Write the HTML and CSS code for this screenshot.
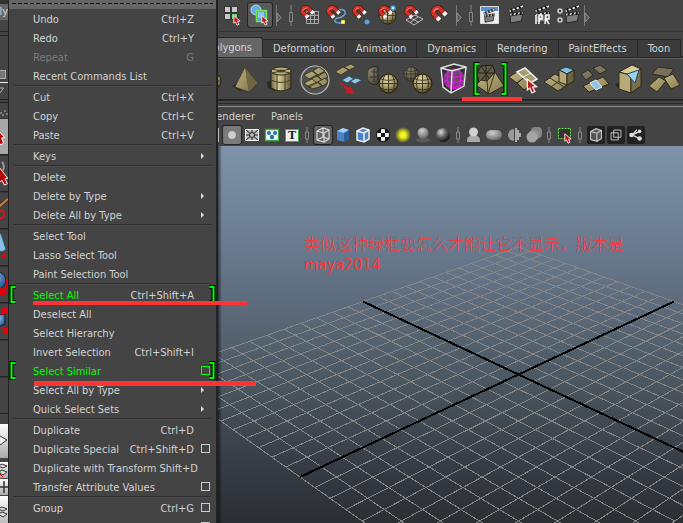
FILE: index.html
```html
<!DOCTYPE html>
<html lang="en">
<head>
<meta charset="utf-8">
<title>Maya 2014</title>
<link rel="stylesheet" href="styles.css">
</head>
<body>
<svg class="defs" width="0" height="0" aria-hidden="true">
  <defs>
    <radialGradient id="tan" cx=".4" cy=".3" r=".75"><stop offset="0" stop-color="#e8dcae"/><stop offset=".55" stop-color="#a39768"/><stop offset="1" stop-color="#4c4529"/></radialGradient>
    <radialGradient id="dimtan" cx=".4" cy=".3" r=".75"><stop offset="0" stop-color="#8b856d"/><stop offset="1" stop-color="#4a4639"/></radialGradient>
    <radialGradient id="grey" cx=".4" cy=".3" r=".7"><stop offset="0" stop-color="#d0d0d0"/><stop offset="1" stop-color="#6c6c6c"/></radialGradient>
    <radialGradient id="ball" cx=".35" cy=".3" r=".7"><stop offset="0" stop-color="#ddd"/><stop offset=".5" stop-color="#666"/><stop offset="1" stop-color="#181818"/></radialGradient>
    <radialGradient id="glow"><stop offset="0" stop-color="#ffff30"/><stop offset=".4" stop-color="#e6e61a"/><stop offset="1" stop-color="#e6e61a" stop-opacity="0"/></radialGradient>
    <radialGradient id="blue" cx=".4" cy=".3" r=".8"><stop offset="0" stop-color="#7fb4e8"/><stop offset="1" stop-color="#173f78"/></radialGradient>
    <linearGradient id="face" x2="1" y2="1"><stop offset="0" stop-color="#c4b888"/><stop offset="1" stop-color="#85794f"/></linearGradient>
    <linearGradient id="barrel"><stop offset="0" stop-color="#6f6642"/><stop offset=".4" stop-color="#d8cc9a"/><stop offset="1" stop-color="#5a5233"/></linearGradient>
  </defs>
  <symbol id="cursor" viewBox="0 0 8 11"><path d="M.8.8v7.4l1.7-1.3 1.5 3.3 2-.9-1.5-3.1 2.6-.2z" fill="#c01818" stroke="#f4e8e8" stroke-width=".9"/></symbol>
  <symbol id="magnet" viewBox="0 0 16 15"><path d="M8 11.5 4 7.500A3.500 3.500 0 0 1 9 3l4.500 4.500" fill="none" stroke="#5c0f0b" stroke-width="4.600"/><path d="M8 11.500 4 7.500A3.500 3.500 0 0 1 9 3l4.500 4.500" fill="none" stroke="#d33226" stroke-width="3.400"/><path d="M4 5.500Q5.500 2.500 8 3" fill="none" stroke="#f4897c" stroke-width="1"/><path d="M6.900 10.400 9 12.500M12.300 6.300l2.100 2.100" stroke="#fff" stroke-width="3.600"/></symbol>
  <symbol id="sphere" viewBox="0 0 20 20"><circle cx="10" cy="10" r="9" fill="url(#tan)" stroke="#26220f"/><path d="M10 1v18M1 10h18M2.500 5.500q7.500 3 15 0M2.500 14.500q7.500 3 15 0M6.500 2q-4.500 8 0 16M13.500 2q4.500 8 0 16" fill="none" stroke="#3c3620" stroke-width=".9"/></symbol>
  <symbol id="dimsphere" viewBox="0 0 20 20"><circle cx="10" cy="10" r="9" fill="url(#dimtan)" stroke="#2b2820"/><path d="M10 1v18M1 10h18M2.500 5.500q7.500 3 15 0M2.500 14.500q7.500 3 15 0M6.500 2q-4.500 8 0 16M13.500 2q4.500 8 0 16" fill="none" stroke="#302c20" stroke-width=".9"/></symbol>
  <symbol id="clapper" viewBox="0 0 17 20"><path d="M2 10h12.500l-1 7L2.500 19z" fill="#7d7d7d" stroke="#262626"/><path d="M1.500 9.500 15 7.500v2.500l-13 2zM.8 6 15 .8l.8 2.500L1.500 8.500z" fill="#eee" stroke="#222" stroke-width=".8"/><path d="m3 5 1.500 2.500M7 3.500 8.500 6M11 2l1.500 2.500M4 11.500l1.500-2.500M8 11l1.500-2.500M12 10.500 13.500 8" stroke="#111" stroke-width="1.800"/></symbol>
  <symbol id="arrow" viewBox="0 0 12 26"><path d="M3.500 3v21" stroke="#777"/><path d="M4 11v9l4-4.500z" fill="#555" stroke="#999"/></symbol>
  <symbol id="handle" viewBox="0 0 11 26"><path d="M5.500 3v21" stroke="#858585"/><path d="M4 10.500h3v9H4z" fill="#444" stroke="#858585"/></symbol>
  <symbol id="grip" viewBox="0 0 11 20"><path d="M5 2v16" stroke="#888"/><path d="M3.500 7h3v7h-3z" fill="#444" stroke="#888"/></symbol>
  <symbol id="bracket" viewBox="0 0 8 19"><path d="M6.500 2h-4v15h4" fill="none" stroke="#000" stroke-width="4"/><path d="M6.500 2h-4v15h4" fill="none" stroke="#0f0" stroke-width="2"/></symbol>
  <symbol id="bracket-tall" viewBox="0 0 8 36"><path d="M6.500 3h-4v30h4" fill="none" stroke="#000" stroke-width="4"/><path d="M6.500 3h-4v30h4" fill="none" stroke="#0f0" stroke-width="2"/></symbol>
</svg>
<div class="app">
  <aside class="toolbox" aria-label="Tool box">
    <span class="strip-tab">Poly</span>
    <span class="strip-shelf"><i class="chip"></i></span>
    <svg class="strip-head" viewBox="0 0 8 36"><path d="M0 .5h8" stroke="#eee"/><path d="M-6 6h9.500L0 11" fill="none" stroke="#aaa"/><path d="M0 17.500h8M0 20.500h8" stroke="#222"/><path d="M0 31h2M4 29h2M2 33h2M6 32h2" stroke="#777" stroke-width="2"/></svg>
    <button class="tool lit" aria-label="Select"><svg viewBox="0 0 8 36"><path d="M-4 9 4.500 19l-3 .5 2 5.500-3 1.500-4-6z" fill="#b80000" stroke="#fff"/></svg></button>
    <button class="tool" aria-label="Lasso"><svg viewBox="0 0 8 36"><path d="M2 6q3 4 1 9" stroke="#999" stroke-width="2" fill="none"/><path d="M-3 9 8 23l-3 .5 2.500 5-3 1.500L2 25l-5 4z" fill="#b80000" stroke="#fff"/></svg></button>
    <button class="tool" aria-label="Paint"><svg viewBox="0 0 8 36"><path d="M8 6-2 15" stroke="#422" stroke-width="4"/><path d="M8 6-2 15" stroke="#b07c48" stroke-width="2.500"/><path d="M0 17.500c6 0 5 10-1 8" fill="none" stroke="#e01010" stroke-width="2"/></svg></button>
    <button class="tool" aria-label="Move"><svg viewBox="0 0 8 36"><path d="M-2 4h3l5 16-3 2h-6z" fill="#8ac0e4" stroke="#2b5d85"/><path d="m0 28 5-5v6z" fill="#f00000"/></svg></button>
    <button class="tool" aria-label="Rotate"><svg viewBox="0 0 8 36"><circle cx="-3" cy="14" r="9" fill="url(#blue)" stroke="#123"/><path d="M0 26q8-1 7-14" fill="none" stroke="#e00010" stroke-width="2.500"/><path d="m-1 22 5-1-1 4 5 1-4 3h-5z" fill="#e00010"/></svg></button>
    <button class="tool" aria-label="Scale"><svg viewBox="0 0 8 36"><path d="M-4 12 5 10v11l-9 3z" fill="url(#blue)" stroke="#123"/><path d="m1 5 7-2v8l-2-2-4 3zM1 23l5 2 2-3v10l-6-3 2-1z" fill="#e8000c"/></svg></button>
    <span class="tool"></span>
    <span class="tool"></span>
    <span class="strip-gap"></span>
    <button class="view tall" aria-label="Single view"><svg viewBox="0 0 8 34"><path d="m-5 17 5-5 7 4-7 5z" fill="#eee" stroke="#333"/></svg></button>
    <button class="view" aria-label="Four view"><svg viewBox="0 0 8 16"><path d="m-2 4 4-2 5 2-4 2zM-2 10l4-2 5 2-4 3z" fill="#ddd" stroke="#333"/><path d="M0 9v4" stroke="#0b0"/><path d="m0 12 3 3" stroke="#d00"/></svg></button>
    <button class="view" aria-label="Split view"><svg viewBox="0 0 8 16"><path d="M0 8h8M4 2v12" stroke="#333" stroke-width="1.500"/></svg></button>
    <button class="view tall" aria-label="Outliner view"><svg viewBox="0 0 8 34"><path d="m-2 13 4-2 5 2-4 2zM-2 18l4-2 5 2-4 3z" fill="#ddd" stroke="#333"/></svg></button>
  </aside>

  <nav class="menu" aria-label="Edit menu">
    <div class="tearoff"></div>
    <ul>
      <li><button class="item">Undo<kbd>Ctrl+Z</kbd></button></li>
      <li><button class="item">Redo<kbd>Ctrl+Y</kbd></button></li>
      <li><button class="item" disabled>Repeat<kbd>G</kbd></button></li>
      <li><button class="item">Recent Commands List</button></li>
    </ul>
    <ul>
      <li><button class="item">Cut<kbd>Ctrl+X</kbd></button></li>
      <li><button class="item">Copy<kbd>Ctrl+C</kbd></button></li>
      <li><button class="item">Paste<kbd>Ctrl+V</kbd></button></li>
    </ul>
    <ul>
      <li class="sub"><button class="item">Keys</button></li>
    </ul>
    <ul>
      <li><button class="item">Delete</button></li>
      <li class="sub"><button class="item">Delete by Type</button></li>
      <li class="sub"><button class="item">Delete All by Type</button></li>
    </ul>
    <ul>
      <li><button class="item">Select Tool</button></li>
      <li><button class="item">Lasso Select Tool</button></li>
      <li><button class="item">Paint Selection Tool</button></li>
    </ul>
    <ul>
      <li class="new"><svg class="bracket"><use href="#bracket"/></svg><button class="item">Select All<kbd>Ctrl+Shift+A</kbd></button><svg class="bracket end"><use href="#bracket"/></svg><i class="mark mark-all"></i></li>
      <li><button class="item">Deselect All</button></li>
      <li><button class="item">Select Hierarchy</button></li>
      <li><button class="item">Invert Selection<kbd>Ctrl+Shift+I</kbd></button></li>
      <li class="new"><svg class="bracket"><use href="#bracket"/></svg><button class="item">Select Similar</button><button class="option" aria-label="Select Similar options"></button><svg class="bracket end"><use href="#bracket"/></svg><i class="mark mark-similar"></i></li>
      <li class="sub"><button class="item">Select All by Type</button></li>
      <li class="sub"><button class="item">Quick Select Sets</button></li>
    </ul>
    <ul>
      <li><button class="item">Duplicate<kbd>Ctrl+D</kbd></button></li>
      <li><button class="item">Duplicate Special<kbd>Ctrl+Shift+D</kbd></button><button class="option" aria-label="Duplicate Special options"></button></li>
      <li><button class="item">Duplicate with Transform<kbd>Shift+D</kbd></button></li>
      <li><button class="item">Transfer Attribute Values</button><button class="option" aria-label="Transfer Attribute Values options"></button></li>
    </ul>
    <ul>
      <li><button class="item">Group<kbd>Ctrl+G</kbd></button><button class="option" aria-label="Group options"></button></li>
      <li><button class="item" aria-label="More"></button><button class="option" aria-label="More options"></button></li>
    </ul>
  </nav>

  <main>
    <div class="status">
      <button aria-label="Select by hierarchy"><svg viewBox="0 0 26 26"><g fill="#c8c8c8" stroke="#222" stroke-width=".8"><path d="M3.500 4.500h6v6h-6zM10.500 4.500h6v6h-6zM3.500 11.500h6v6h-6z"/><path d="M10.500 11.500h6v6h-6z" fill="#7ed67e"/></g><use href="#cursor" x="12" y="13" width="8" height="11"/></svg></button>
      <button class="on" aria-label="Select by object"><svg viewBox="0 0 26 26"><circle cx="9" cy="8" r="5" fill="#6cabe0" stroke="#b4daf7"/><path d="M9.500 8.500h10v11h-10z" fill="#5d9fd8" stroke="#6de34f" stroke-width="1.500"/><path d="M11 10h6v6h-6z" fill="#8cc4ef"/><use href="#cursor" x="14" y="13" width="8" height="11"/></svg></button>
      <svg class="sep"><use href="#arrow"/></svg><svg class="sep"><use href="#handle"/></svg>
      <button aria-label="Snap to grids"><svg viewBox="0 0 26 26"><path d="M9.500 9.500h12v12h-12zM13.500 9v12M17.500 9v12M9 13.500h13M9 17.500h13" fill="none" stroke="#aaa"/><use href="#magnet" x="2" y="3" width="16" height="15"/></svg></button>
      <button aria-label="Snap to curves"><svg viewBox="0 0 26 26"><path d="M14 8q9-2 8 4-3 4-8 4-6 5 5 5" fill="none" stroke="#6b9fd0" stroke-width="1.500"/><path d="M18.500 18.500h3v3h-3z" fill="#ffc" stroke="#e8e020"/><use href="#magnet" x="2" y="3" width="16" height="15"/></svg></button>
      <button aria-label="Snap to points"><svg viewBox="0 0 26 26"><circle cx="18" cy="20" r="2.500" fill="#5f9fe0"/><use href="#magnet" x="2" y="3" width="16" height="15"/></svg></button>
      <button aria-label="Snap to projected center"><svg viewBox="0 0 26 26"><use href="#sphere" x="3" y="4" width="19" height="19"/><use href="#magnet" x="2" y="3" width="16" height="15"/><circle cx="18" cy="6" r="2" fill="#eee" stroke="#4a9ae0" stroke-width="1.500"/></svg></button>
      <button aria-label="Snap to view planes"><svg viewBox="0 0 26 26"><path d="m5 18 9-5 8 4-9 6zM9 15.500l9 5M17 15l-8 5.500" fill="none" stroke="#bbb"/><use href="#magnet" x="2" y="3" width="16" height="15"/></svg></button>
      <button aria-label="Make live"><svg viewBox="0 0 26 26"><use href="#magnet" x="2" y="3" width="19" height="18"/></svg></button>
      <svg class="sep"><use href="#arrow"/></svg><svg class="sep"><use href="#handle"/></svg>
      <button aria-label="Render view"><svg viewBox="0 0 26 26"><path d="M3.500 4.500h18v17h-18z" fill="#eee" stroke="#ddd"/><path d="M4 5h17v4H4z" fill="#4f93d5"/><use href="#clapper" x="6" y="6" width="13" height="15"/></svg></button>
      <button aria-label="Render frame"><svg viewBox="0 0 26 26"><use href="#clapper" x="5" y="2" width="17" height="20"/></svg></button>
      <button aria-label="IPR render"><svg viewBox="0 0 26 26"><use href="#clapper" x="5" y="2" width="17" height="20"/><path d="M7 13v9M10 22v-9h3v4h-3m6 5 1-9h3v4h-3l3 5" fill="none" stroke="#fff" stroke-width="1.500"/></svg></button>
      <button aria-label="Render settings"><svg viewBox="0 0 26 26"><use href="#clapper" x="9" y="2" width="17" height="20"/><g fill="#444" stroke="#ccc" stroke-width="1.500"><circle cx="5" cy="9" r="2"/><circle cx="5" cy="18" r="2"/></g></svg></button>
      <svg class="sep"><use href="#arrow"/></svg>
    </div>

    <div class="tabs" role="tablist">
      <button class="tab current" role="tab">Polygons</button><button class="tab" role="tab">Deformation</button><button class="tab" role="tab">Animation</button><button class="tab" role="tab">Dynamics</button><button class="tab" role="tab">Rendering</button><button class="tab" role="tab">PaintEffects</button><button class="tab" role="tab">Toon</button>
    </div>

    <div class="shelf">
      <button class="cut" aria-label="Sphere"><svg viewBox="0 0 35 35"><use href="#sphere" x="9" y="10" width="20" height="20"/></svg></button>
      <button aria-label="Pyramid"><svg viewBox="0 0 35 35"><path d="m4 24 12-7 2 10-6 2z" fill="#292929"/><path d="M17 5 7 25l14 5z" fill="url(#face)"/><path d="m17 5 4 25 9-9z" fill="#6f6642"/><path d="M17 5 7 25l14 5 9-9z" fill="none" stroke="#39341f" stroke-width=".7"/></svg></button>
      <button aria-label="Cylinder"><svg viewBox="0 0 35 35"><path d="m4 20 8-4v13l-7-3z" fill="#292929"/><path d="M8 9v17q10 6 20 0V9z" fill="url(#barrel)" stroke="#2a2614"/><ellipse cx="18" cy="9" rx="10" ry="4" fill="#bdb182" stroke="#2a2614"/><ellipse cx="18" cy="9" rx="4" ry="1.500" fill="#4e482f"/><path d="M8 18q10 5 20 0M14 13v16M22 13v16M9 7l18 4M9 11l18-4" fill="none" stroke="#494226"/></svg></button>
      <button aria-label="Plane"><svg viewBox="0 0 35 35"><circle cx="17" cy="18" r="14" fill="#505050" stroke="#bcbcbc" stroke-width="1.200"/><g fill="url(#face)" stroke="#302b18" stroke-width=".8"><path d="m6 13 8-4 5 4-8 4zM15 9l6-4 6 4-7 4zM11 18l8-4 5 4-8 4zM20 14l7-4 3 5-6 3z"/><path d="m6 21 8-4 5 4-8 4zM15 27l-5-3 9-4 5 4zM20 20l7-4 3 4-5 4z"/></g></svg></button>
      <button aria-label="Combine"><svg viewBox="0 0 35 35"><g fill="url(#face)" stroke="#302b18" stroke-width=".8"><path d="m2 10 8-5 6 3-8 5zM11 5l7-3 5 3-7 3z"/></g><path d="m9 18 7-4 5 3-7 4zM17 19l6-3 6 2-7 4z" fill="#8fc7e3" stroke="#27465a" stroke-width=".8"/><path d="m4 18 12 8 1-2 5 8-10-1 2-2z" fill="#c81c24"/></svg></button>
      <button aria-label="Separate"><svg viewBox="0 0 35 35"><path d="M10 5a9 9 0 1 0 0 17z" fill="url(#dimtan)" stroke="#2b2820"/><path d="M3 10h7M2 15h8M6 7v13" stroke="#333"/><use href="#sphere" x="10" y="11" width="21" height="21"/></svg></button>
      <button aria-label="Extract"><svg viewBox="0 0 35 35"><use href="#dimsphere" x="0" y="4" width="16" height="16"/><use href="#sphere" x="9" y="11" width="21" height="21"/></svg></button>
      <button aria-label="Smooth"><svg viewBox="0 0 35 35"><path d="m3 6 13-4 12 3-2 19-13 8-8-7z" fill="#333"/><circle cx="16" cy="17" r="10" fill="#69466a" stroke="#d018d0"/><path d="M7 13q9 5 18 0M6 18q10 5 20 0M8 23q8 4 15 0M11 8q-4 10 1 18M16 7v20M21 8q4 10-1 17" fill="none" stroke="#d61ed6" stroke-width="1.200"/><path d="m3 6 11 3 14-4M14 9l-1 22M3 6l2 19 8 6 13-7 2-19-12-3z" fill="none" stroke="#e4e4e4" stroke-width="1.400"/></svg></button>
      <button class="new" aria-label="Reduce"><svg viewBox="0 0 35 35"><path d="m4 11 4-7 11-1 3 6-6 9-10 2z" fill="#625b48" stroke="#1f1c14"/><path d="m8 4 9 14m3-15L7 20M4 11h17M13 4v15" stroke="#25221a" fill="none"/><path d="m3 23 5-5 6 1 8-9 9 14-15 8z" fill="url(#face)" stroke="#302b18"/><path d="m22 10-7 22-1-13" fill="none" stroke="#39341f"/></svg><svg class="bracket"><use href="#bracket-tall"/></svg><svg class="bracket end"><use href="#bracket-tall"/></svg></button>
      <button aria-label="Split polygon"><svg viewBox="0 0 35 35"><g fill="url(#face)" stroke="#302b18"><path d="m1 15 8-5 8 5-8 6zM9 21l8-6 7 7-8 6z"/></g><path d="m9 10 8-4 12 11-7 4z" fill="#a59a70" stroke="#f3f3f3" stroke-width="1.500"/><path d="m15 15 8-4" stroke="#f3f3f3"/><use href="#cursor" x="18" y="16" width="12" height="16"/></svg></button>
      <button aria-label="Extrude"><svg viewBox="0 0 35 35"><path d="m1 20 11-8 15 9-12 8z" fill="url(#face)" stroke="#302b18"/><path d="m7 16 14 9M8 25l11-8" stroke="#39341f"/><path d="m16 8 7-3 8 3-7 4z" fill="#83bfe2" stroke="#27465a"/><path d="M16 8v12l8 3V12z" fill="#b5a97a" stroke="#302b18"/><path d="M31 8v11l-7 4V12z" fill="#6c6341" stroke="#302b18"/></svg></button>
      <button aria-label="Bridge"><svg viewBox="0 0 35 35"><path d="m3 12 7-4 5 5-7 5zM15 6l7-3 7 5-7 4z" fill="#7a745f" stroke="#302b18"/><path d="m5 24 20-9 6 7-20 8z" fill="url(#face)" stroke="#302b18"/><path d="m12 21 6-3 6 7-6 3z" fill="#8ec6e6" stroke="#eee"/></svg></button>
      <button aria-label="Bevel"><svg viewBox="0 0 35 35"><path d="m2 22 10-4 3 12-9-3z" fill="#292929"/><path d="M6 10v17l12 4V13z" fill="#b5a977" stroke="#302b18"/><path d="m6 10 13-7 9 4-10 6z" fill="#d8cc9a" stroke="#302b18"/><path d="M28 7v17l-10 7V13z" fill="#786f4a" stroke="#302b18"/><path d="m14 12 12-4-4 13z" fill="#9bd0ee" stroke="#27465a"/></svg></button>
      <button aria-label="Merge"><svg viewBox="0 0 35 35"><path d="m4 12 6-7 16 2-6 8z" fill="#77715c" stroke="#302b18"/><path d="m1 24 10-9 7 4-9 11z" fill="url(#face)" stroke="#302b18"/><path d="m16 16 9-4 7 11-9 4z" fill="url(#face)" stroke="#302b18"/></svg></button>
      <i class="mark mark-shelf"></i>
    </div>

    <div class="panelmenu"><button class="cut">Renderer</button><button>Panels</button></div>

    <div class="viewbar">
      <button class="edge" aria-label="Film gate"></button>
      <button class="on light" aria-label="Resolution gate"><svg viewBox="0 0 20 20"><circle cx="10" cy="10" r="4.500" fill="#ccc" stroke="#777"/></svg></button>
      <button aria-label="Gate mask"><svg viewBox="0 0 20 20"><path d="M3.500 4.500h13v11h-13z" fill="#bbb" stroke="#f4f4f4"/><path d="m4 5 12 10M16 5 4 15M4 10h12M10 5v10" stroke="#222"/><circle cx="10" cy="10" r="2.500" fill="#bbb" stroke="#222"/></svg></button>
      <button aria-label="Field chart"><svg viewBox="0 0 20 20"><path d="M3.500 4.500h13v11h-13z" fill="#f4f4f4" stroke="#3fae3f" stroke-width="1.300"/><g fill="#286fae"><circle cx="7" cy="8" r="2"/><circle cx="13" cy="8" r="2"/><circle cx="10" cy="12" r="2.200"/></g></svg></button>
      <button class="safe" aria-label="Safe title"><span>T</span></button>
      <svg class="sep"><use href="#grip"/></svg>
      <button class="on" aria-label="Wireframe"><svg viewBox="0 0 20 20"><path d="m4 6 6-3 6 2v9l-5 3-7-2zM4 6l7 2 5-3M11 8v9M10 3v9l-6 3M10 12l6 2" fill="none" stroke="#d8d8d8" stroke-width="1.200"/></svg></button>
      <button aria-label="Smooth shade"><svg viewBox="0 0 20 20"><path d="m4 6 6-3 6 2v9l-5 3-7-2z" fill="#4a82c4"/><path d="m4 6 6-3 6 2-5 3z" fill="#a2ccf2"/><path d="m11 8 5-3v9l-5 3z" fill="#2e5d99"/></svg></button>
      <button aria-label="Wireframe on shaded"><svg viewBox="0 0 20 20"><path d="m4 6 6-3 6 2v9l-5 3-7-2z" fill="#4a82c4" stroke="#eee" stroke-width="1.500"/><path d="m4 6 7 2 5-3M11 8v9" fill="none" stroke="#eee" stroke-width="1.500"/></svg></button>
      <button aria-label="Textured"><svg viewBox="0 0 20 20"><circle cx="10" cy="10" r="6.500" fill="#f4f4f4" stroke="#111"/><path d="M8 8h4v4H8zM5 5l3-1.500V8H4zM12 3.500 15 5l1 3h-4zM4 12h4v4.500L5 15zM12 12h4l-1 3-3 1.500z" fill="#111"/></svg></button>
      <button aria-label="Use all lights"><svg viewBox="0 0 20 20"><circle cx="10" cy="10" r="8" fill="url(#glow)"/></svg></button>
      <button aria-label="Shadows"><svg viewBox="0 0 20 20"><ellipse cx="10" cy="15" rx="7" ry="2.500" fill="#5a5a5a"/><circle cx="10" cy="8" r="5.500" fill="url(#grey)"/></svg></button>
      <button aria-label="Occlusion"><svg viewBox="0 0 20 20"><circle cx="10" cy="10" r="7" fill="url(#ball)"/></svg></button>
      <svg class="sep"><use href="#grip"/></svg>
      <button aria-label="Isolate"><svg viewBox="0 0 20 20"><path d="M3 16q0-5 4-5h5q4 0 4 5v1H3z" fill="#aaa"/><circle cx="9.500" cy="7" r="4.500" fill="#d0d0d0"/></svg></button>
      <button aria-label="Motion blur"><svg viewBox="0 0 20 20"><rect x="2" y="5" width="16" height="10" rx="5" fill="url(#grey)"/></svg></button>
      <button aria-label="Anti-aliasing"><svg viewBox="0 0 20 20"><path d="M10 4a6 6 0 1 0 0 12z" fill="#999"/><path d="M11 3h2v2h2v3h2v4h-2v3h-2v2h-2z" fill="#aaa"/></svg></button>
      <button aria-label="Depth of field"><svg viewBox="0 0 20 20"><rect x="7" y="2" width="11" height="11" rx="4" fill="#858585"/><rect x="5" y="5" width="10" height="10" rx="4" fill="#929292"/><circle cx="8" cy="12" r="5.500" fill="#a5a5a5"/></svg></button>
      <svg class="sep"><use href="#grip"/></svg>
      <button aria-label="Isolate select"><svg viewBox="0 0 20 20"><path d="M3.500 3.500h12v10h-12z" fill="#333" stroke="#68df4a" stroke-dasharray="2 1"/><use href="#cursor" x="9" y="8" width="8" height="11"/></svg></button>
      <svg class="sep"><use href="#grip"/></svg>
      <button class="dark" aria-label="X-ray"><svg viewBox="0 0 20 20"><path d="m4 6 6-3 6 2v9l-5 3-7-2z" fill="#555" stroke="#ccc" stroke-width="1.200"/><path d="m4 6 7 2 5-3M11 8v9" fill="none" stroke="#ccc" stroke-width="1.200"/></svg></button>
      <button class="dark" aria-label="X-ray joints"><svg viewBox="0 0 20 20"><path d="M7.500 4.500h8v8h-8zM4.500 7.500h8v8h-8z" fill="none" stroke="#ccc"/></svg></button>
      <button class="dark" aria-label="X-ray components"><svg viewBox="0 0 20 20"><path d="m14 6-8 4 8 4M6 10l5-6" fill="none" stroke="#ddd" stroke-width="1.500"/><g fill="#ddd"><circle cx="14" cy="6" r="2"/><circle cx="5" cy="10" r="2.500"/><circle cx="14" cy="14" r="2.500"/></g></svg></button>
    </div>

    <section class="viewport" aria-label="Perspective view">
      <svg id="grid" width="466" height="377" viewBox="0 0 466 377" shape-rendering="crispEdges"></svg>
      <p class="note" lang="zh">类似这种绿框要怎么才能让它不显示，版本是<br>maya2014</p>
    </section>
  </main>
</div>
<script src="grid.js"></script>
</body>
</html>
```
FILE: styles.css
```css
*, ::before, ::after { box-sizing: border-box; }
body {
  margin: 0;
  background: #444;
  color: #d2d2d2;
  font: 11px/19px "DejaVu Sans Condensed", "Noto Sans CJK SC", sans-serif;
}
button {
  margin: 0; padding: 0; border: 0;
  background: none; color: inherit; font: inherit;
}
svg { display: block; overflow: hidden; flex: none; }
.defs { position: absolute; }
.app {
  display: grid;
  grid-template-columns: 8px 210px minmax(0, 1fr);
  height: 100vh;
  overflow: hidden;
}

/* tool box */
.toolbox { display: flex; flex-direction: column; overflow: hidden; background: #444; }
.toolbox > * { flex: none; }
.strip-tab {
  display: flex; justify-content: flex-end;
  height: 20px; margin-bottom: 11px; overflow: hidden;
  background: #666; border-top: 4px solid #333;
  line-height: 16px;
}
.strip-shelf {
  height: 51px; padding-top: 38px; border-top: 1px solid #222;
  background: linear-gradient(#444 3px, #222 3px 4px, #444 4px);
}
.chip { display: block; width: 6px; height: 9px; border: 1px solid #aaa; border-left: 0; background: #777; }
.strip-head { width: 8px; height: 36px; }
.tool { display: block; width: 8px; height: 37px; border-bottom: 1px solid #222; border-top: 1px solid #333; }
.tool svg { width: 8px; height: 35px; }
.tool.lit { background: #a8a8a8; }
.strip-gap { height: 10px; }
.view { display: block; height: 16px; margin-bottom: 1px; background: linear-gradient(#fff, #aaa); }
.view svg { width: 8px; height: 16px; }
.view.tall { height: 34px; margin-bottom: 4px; }
.view.tall svg { height: 34px; }

/* edit menu */
.menu {
  position: relative; z-index: 1;
  background: #444;
  border: solid #222; border-width: 0 2px 0 1px;
  white-space: nowrap;
}
.tearoff { height: 9px; padding-top: 3px; background: #666; }
.tearoff::before {
  content: ""; display: block; height: 1px; margin: 0 3px;
  background: repeating-linear-gradient(90deg, #111 0 4px, transparent 4px 6px);
}
.menu ul { margin: 0; padding: 0; list-style: none; }
.menu ul + ul::before {
  content: ""; display: block; height: 2px; margin: 0 5px;
  border-top: 1px solid #303030; border-bottom: 1px solid #4c4c4c;
}
.menu li { position: relative; display: flex; align-items: center; height: 19px; }
.item {
  display: flex; justify-content: space-between; gap: 3px;
  min-width: 185px; height: 19px; padding: 1px 0 0 24px; text-align: left;
}
.item:disabled { color: #7a7a7a; }
kbd { font: inherit; }
.new .item { color: #0f0; }
.new kbd { color: #d2d2d2; }
.option { width: 9px; height: 9px; margin-left: 7px; border: 1px solid #ccc; }
.new .option { border-color: #0f0; }
.sub::after {
  content: ""; margin-left: 7px;
  border: 3px solid transparent; border-left-color: #ddd; border-right: 0;
}
.bracket { position: absolute; left: 0; top: 0; width: 8px; height: 19px; }
.bracket.end { left: auto; right: 0; transform: scaleX(-1); }

.mark { position: absolute; z-index: 2; height: 4px; background: #ff3535; }
.mark-all { left: 24px; top: 16px; width: 214px; }
.mark-similar { left: 25px; top: 20px; width: 222px; height: 5px; }
.mark-shelf { left: 244px; top: 38px; width: 60px; }

/* main window */
main { display: flex; flex-direction: column; overflow: hidden; }
main > div { flex: none; display: flex; }
.status { height: 32px; padding: 2px 0 3px 3px; border-bottom: 1px solid #333; }
.status button, .status button svg { width: 26px; height: 26px; }
.status button { flex: none; }
.status .on { background: #5a5a5a; box-shadow: inset 0 0 0 1px #252525; border-radius: 3px; }
.status .sep { width: 12px; height: 26px; }

.tabs { height: 26px; padding-top: 5px; border-bottom: 2px solid #2c2c2c; }
.tab {
  flex: none;
  height: 18px; margin-top: 2px; padding: 0 10px;
  background: #3b3b3b; border: solid #262626; border-width: 1px 1px 0 0;
  line-height: 17px;
}
.tab.current {
  display: flex; justify-content: flex-end;
  width: 45px; height: 20px; margin-top: 0; overflow: hidden;
  background: #666; border-radius: 0 3px 0 0; line-height: 19px;
}

main > .shelf {
  position: relative; height: 42px; padding-top: 2px;
  border-top: 1px solid #606060; border-bottom: 1px solid #222;
}
.shelf button { position: relative; flex: none; width: 35px; height: 36px; }
.shelf button > svg:first-child { width: 35px; height: 35px; }
.shelf button.cut { display: flex; justify-content: flex-end; width: 10px; overflow: hidden; }
.shelf .bracket { left: 0; top: 0; width: 8px; height: 36px; }
.shelf .bracket.end { left: auto; right: 0; }

.panelmenu {
  height: 25px; padding-top: 6px;
  border-top: 1px solid #2a2a2a;
  background: linear-gradient(#444 2px, #2a2a2a 2px 3px, #444 3px 5px, #909090 5px 6px, #444 6px);
}
.panelmenu button { flex: none; padding: 0 8px; }
.panelmenu .cut { display: flex; justify-content: flex-end; width: 45px; overflow: hidden; }

.viewbar { height: 21px; }
.viewbar button { flex: none; width: 20px; height: 20px; }
.viewbar svg { width: 20px; height: 20px; }
.viewbar .sep { width: 11px; }
.viewbar .edge { width: 4px; height: 14px; margin: 3px 0; background: linear-gradient(90deg, #bbb 1px, #444 1px); }
.viewbar .on { background: #606060; border-radius: 3px; box-shadow: inset 0 0 0 1px #222; }
.viewbar .light { background: #7a7a7a; }
.viewbar .dark { background: #222; border-radius: 3px; background-clip: content-box; padding: 1px; }
.viewbar .dark svg { width: 18px; height: 18px; }
.viewbar .safe { padding: 3px; }
.safe span {
  display: block; height: 13px; background: #eee; border: 1px solid #3fae3f;
  color: #111; font: bold 12px/11px "Liberation Serif", serif; text-align: center;
}

.viewport {
  position: relative; flex: 1; overflow: hidden;
  background: linear-gradient(#7f93a9, #66768a 30%, #4b5761 60%, #363c45 82%, #292c2f);
}
.viewport::before {
  content: ""; position: absolute; left: 0; top: 0; bottom: 0; width: 4px;
  background: linear-gradient(90deg, #0008, #0000);
}
.note {
  position: absolute; left: 86px; top: 89px; margin: 0;
  color: #ff3535; font-size: 16px; font-weight: 300; line-height: 20px; white-space: nowrap;
}
```
FILE: grid.js
```js
// Ground grid, projected with a perspective camera looking down the diagonal.
const svg = document.getElementById("grid");
const CELLS = 12;

function project(u, v) {
  const across = u - v, depth = u + v;
  const w = 1 - 0.1685 * depth;
  return [300.5 + 181.7 * across / w, 228.5 + 85.25 * depth / w];
}

function line(from, to, color, width) {
  const el = document.createElementNS("http://www.w3.org/2000/svg", "line");
  const [x1, y1] = project(...from), [x2, y2] = project(...to);
  const attrs = { x1, y1, x2, y2, stroke: color, "stroke-width": width };
  for (const name in attrs) el.setAttribute(name, attrs[name]);
  svg.appendChild(el);
}

for (let i = -CELLS; i <= CELLS; i++) {
  if (i === 0) continue;
  const t = i / CELLS;
  line([t, -1], [t, 1], "#858585", 1);
  line([-1, t], [1, t], "#858585", 1);
}
line([0, -1], [0, 1], "#000", 2);
line([-1, 0], [1, 0], "#000", 2);
```
